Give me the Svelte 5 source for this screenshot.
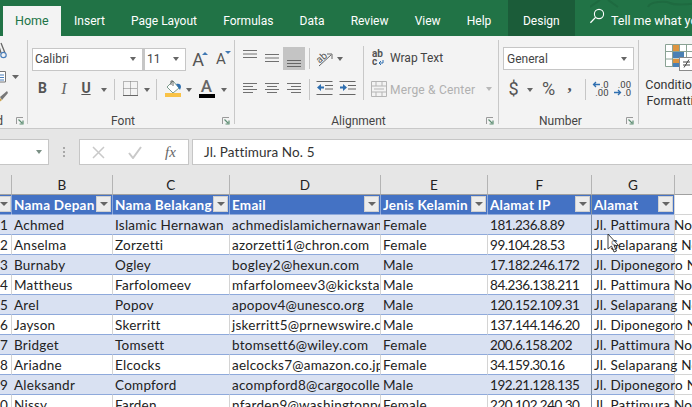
<script>
  const tabs = ['Insert', 'Page Layout', 'Formulas', 'Data', 'Review', 'View', 'Help'];
  const cols = ['B', 'C', 'D', 'E', 'F', 'G'];
  const heads = ['Nama Depan', 'Nama Belakang', 'Email', 'Jenis Kelamin', 'Alamat IP', 'Alamat'];
  const P = 'Jl. Pattimura No. 5', S = 'Jl. Selaparang No. 12', D = 'Jl. Diponegoro No. 8';
  const rows = [
    ['1', 'Achmed', 'Islamic Hernawan', 'achmedislamichernawan@mail.com', 'Female', '181.236.8.89', P],
    ['2', 'Anselma', 'Zorzetti', 'azorzetti1@chron.com', 'Female', '99.104.28.53', S],
    ['3', 'Burnaby', 'Ogley', 'bogley2@hexun.com', 'Male', '17.182.246.172', D],
    ['4', 'Mattheus', 'Farfolomeev', 'mfarfolomeev3@kickstarter.com', 'Male', '84.236.138.211', P],
    ['5', 'Arel', 'Popov', 'apopov4@unesco.org', 'Male', '120.152.109.31', S],
    ['6', 'Jayson', 'Skerritt', 'jskerritt5@prnewswire.com', 'Male', '137.144.146.20', D],
    ['7', 'Bridget', 'Tomsett', 'btomsett6@wiley.com', 'Female', '200.6.158.202', P],
    ['8', 'Ariadne', 'Elcocks', 'aelcocks7@amazon.co.jp', 'Female', '34.159.30.16', S],
    ['9', 'Aleksandr', 'Compford', 'acompford8@cargocollective.com', 'Male', '192.21.128.135', D],
    ['10', 'Nissy', 'Farden', 'nfarden9@washingtonpost.com', 'Female', '220.102.240.30', P]
  ];
</script>

{#snippet caret()}<i class="caret"></i>{/snippet}
{#snippet launcher()}
  <svg class="launcher" width="8" height="8" viewBox="0 0 8 8"><path d="M.5 7V.5H7" fill="none" stroke="#9a9a9a"/><path d="M2.5 2.5 6 6M7 3.5V7H3.5" fill="none" stroke="#5f8f74" stroke-width="1.2"/></svg>
{/snippet}
{#snippet lines(d)}
  <svg width="16" height="21" viewBox="0 0 16 21"><path {d} fill="none" stroke="#707070"/></svg>
{/snippet}

<div class="page">
  <nav class="tabs">
    <svg class="deco" width="110" height="8" viewBox="0 0 110 8"><path d="M0 7 10 0M18 0 28 7M58 7C60 1 76 1 80 3S100 5 110 2" fill="none" stroke="#1e6a40" stroke-width="2"/></svg>
    <div class="tab home">Home</div>
    {#each tabs as t}<div class="tab">{t}</div>{/each}
    <div class="tab design">Design</div>
    <svg class="search" width="16" height="16" viewBox="0 0 16 16"><circle cx="10" cy="6" r="4.6" fill="none" stroke="#fff" stroke-width="1.1"/><path d="M6.6 9.4 1.4 14.8" stroke="#fff" stroke-width="1.3"/></svg>
    <div class="tell">Tell me what you want to do</div>
  </nav>

  <section class="ribbon">
    <div class="group g-clip">
      <svg class="clip-icons" width="27" height="68" viewBox="0 0 27 68">
        <path d="M1 1 5 11M-2 1l3 10" fill="none" stroke="#666" stroke-width="1.3"/>
        <circle cx="3.5" cy="13" r="2.7" fill="none" stroke="#4a7ebb" stroke-width="1.2"/>
        <path d="M-3 29.500H5.500V40H-3" fill="#fff" stroke="#777"/>
        <path d="M0 33h4M0 35.500h4M0 38h4" stroke="#4a7ebb"/>
        <path d="M12 33h7l-3.500 4z" fill="#666"/>
        <path d="M7 49 0 55l2 3 6-7z" fill="#777"/>
        <path d="M0 56 2 58-3 62z" fill="#caa24b"/>
      </svg>
      <div class="label clip-label"><span>Clipboard</span>{@render launcher()}</div>
    </div>

    <div class="group g-font">
      <div class="grid font-r1">
        <div class="box">Calibri{@render caret()}</div>
        <div class="box size">11{@render caret()}</div>
        <div class="cell-i"><span class="big-a">A</span><i class="tri up"></i></div>
        <div class="cell-i"><span class="small-a">A</span><i class="tri down"></i></div>
      </div>
      <div class="grid font-r2">
        <b class="bold">B</b>
        <span class="ital">I</span>
        <b class="under">U</b>
        {@render caret()}
        <i class="sep"></i>
        <svg class="up2" width="15" height="15" viewBox="0 0 15 15"><path d="M.5.500h14v14H.5zM7.500.500v14M.5 7.500h14" fill="none" stroke="#777" stroke-dasharray="1 1"/><path d="M0 14.500h15" stroke="#666"/></svg>
        {@render caret()}
        <i class="sep"></i>
        <svg class="up2" width="17" height="17" viewBox="0 0 17 17"><path d="M8 1 14 8l-6 5-6-6z" fill="#fff" stroke="#7d9c8d"/><path d="M6 5V1h2v5" fill="none" stroke="#666"/><path d="M11 4c3-1 5 0 5 3l-1 3-2-3z" fill="#2f6fb0"/><rect y="13" width="16" height="4" fill="#f9c246"/></svg>
        {@render caret()}
        <div class="color-a up2"><span>A</span><i></i></div>
        {@render caret()}
      </div>
      <div class="label">Font{@render launcher()}</div>
    </div>

    <div class="group g-align">
      <div class="align-main">
        <div class="grid al-r1">
          {@render lines('M1 3.500h14M1 7h14M1 10.500h14')}
          {@render lines('M1 6.500h14M1 10h14M1 13.500h14')}
          <div class="selected"><svg width="16" height="22" viewBox="0 0 16 22"><path d="M1 13.500h14M1 16.500h14M1 19.500h14" fill="none" stroke="#666"/></svg></div>
          <i class="sep"></i>
          <svg class="orient" width="18" height="18" viewBox="0 0 18 18"><text x="1" y="11" transform="rotate(-42 6 9)" class="orient-t">ab</text><path d="M3 16 15 5M11 4h5v5" fill="none" stroke="#666"/></svg>
          {@render caret()}
        </div>
        <div class="grid al-r2">
          {@render lines('M1 4.500h14M1 7.500h10M1 10.500h14M1 13.500h10')}
          {@render lines('M1 4.500h14M3 7.500h10M1 10.500h14M3 13.500h10')}
          {@render lines('M1 4.500h14M5 7.500h10M1 10.500h14M5 13.500h10')}
          <i class="sep"></i>
          <svg class="up2" width="17" height="15" viewBox="0 0 17 15"><path d="M.5.500h16M9 4.500h8M9 8h8M.5 13.500h16" stroke="#666" fill="none"/><path d="M1 6.500 5 3v2.500h3v2H5V10z" fill="#2f6fb0"/></svg>
          <svg class="up2" width="17" height="15" viewBox="0 0 17 15"><path d="M.5.500h16M9 4.500h8M9 8h8M.5 13.500h16" stroke="#666" fill="none"/><path d="M8 6.500 4 3v2.500H1v2h3V10z" fill="#2f6fb0"/></svg>
        </div>
      </div>
      <div class="align-side">
        <div class="side-row">
          <svg class="wrap-i" width="14" height="18" viewBox="0 0 14 18"><text x="0" y="8" class="abc">ab</text><text x="0" y="16" class="abc">c</text><path d="M11 11v3H7M9 12l-2 2 2 2" fill="none" stroke="#2f6fb0"/></svg>
          <span class="side-t">Wrap Text</span>
        </div>
        <div class="side-row off">
          <svg class="merge-i" width="16" height="16" viewBox="0 0 16 16"><path d="M.5.500h15v15H.5zM.5 5h15M.5 11h15M5 .5V5M11 .5V5M5 11v4.500M11 11v4.500M3 8h10" fill="none" stroke="#b5b5b5"/></svg>
          <span class="side-t merge-t">Merge &amp; Center</span>
          {@render caret()}
        </div>
      </div>
      <div class="label">Alignment{@render launcher()}</div>
    </div>

    <div class="group g-num">
      <div class="box general">General{@render caret()}</div>
      <div class="grid num-r2">
        <span class="sym">$</span>
        {@render caret()}
        <span class="sym">%</span>
        <b class="comma">,</b>
        <i class="sep"></i>
        <div class="dec"><svg width="8" height="7" viewBox="0 0 8 7"><path d="M8 3.500H2M4 1 1.500 3.500 4 6" fill="none" stroke="#2f6fb0" stroke-width="1.3"/></svg><span>.0</span><span class="full">.00</span></div>
        <div class="dec"><span class="full top">.00</span><svg width="8" height="7" viewBox="0 0 8 7"><path d="M0 3.500h6M4 1l2.500 2.500L4 6" fill="none" stroke="#2f6fb0" stroke-width="1.3"/></svg><span>.0</span></div>
      </div>
      <div class="label">Number{@render launcher()}</div>
    </div>

    <div class="g-styles">
      <svg class="cf" width="30" height="28" viewBox="0 0 30 28">
        <path d="M.5.500h27v22H.5zM.5 7.500h27M.5 15h27M7.500.5v22M14.500.5v22M21.500.5v22" fill="#fff" stroke="#8aa294"/>
        <path d="M8 1h6v6H8zM8 15h9v4H8z" fill="#dd9440"/>
        <path d="M8 8h11v6H8zM8 19h6v4H8z" fill="#4a80b4"/>
        <rect x="14.500" y="13.500" width="14" height="13" fill="#fff" stroke="#8a8a8a"/>
        <path d="M18 18h7M18 21h7M24 15.500l-5 8" stroke="#444" fill="none"/>
      </svg>
      <div class="cf-t">Conditional<br />Formatting</div>
    </div>
  </section>

  <section class="formula">
    <div class="namebox">{@render caret()}</div>
    <div class="dots"><i></i><i></i><i></i></div>
    <div class="fbtns">
      <svg width="13" height="13" viewBox="0 0 13 13"><path d="M1 1 12 12M12 1 1 12" stroke="#c9c9c9" stroke-width="1.500"/></svg>
      <svg width="14" height="13" viewBox="0 0 14 13"><path d="M1 7l4 5 8-11" fill="none" stroke="#c9c9c9" stroke-width="2"/></svg>
      <span class="fx">fx</span>
    </div>
    <div class="finput">Jl. Pattimura No. 5</div>
  </section>

  <section class="sheet">
    <div class="row colhead">
      <div class="ch"></div>
      {#each cols as c}<div class="ch">{c}</div>{/each}
      <div class="ch"></div>
    </div>
    <div class="row thead">
      <div class="th first"><span class="fb"><i></i></span></div>
      {#each heads as h, i}
        <div class="th" class:thick={i === 5}><span class="tht">{h}</span><span class="fb"><i></i></span></div>
      {/each}
      <div class="rest"></div>
    </div>
    {#each rows as r, n}
      <div class="row data" class:band={n % 2 === 0}>
        <div class="td num"><span>{r[0]}</span></div>
        {#each r.slice(1) as v, i}
          <div class="td" class:ip={i === 4} class:thick={i === 5} class:over={i === 5}>{v}</div>
        {/each}
        <div class="rest"></div>
      </div>
    {/each}
    <svg class="pointer" width="14" height="21" viewBox="0 0 14 21"><path d="M1 1V16L4.500 13 7 19 9.500 18 7 12.500H11.500Z" fill="#ffffff" fill-opacity=".55" stroke="#3c3c3c"/></svg>
  </section>
</div>

<style>
  :global(body) { margin: 0; background: #e6e6e6; }
  .page { width: 692px; height: 407px; overflow: hidden; position: relative; font-family: Roboto, sans-serif; }
  .tabs { display: flex; height: 36px; background: #217346; color: #fff; font-size: 12px; align-items: flex-end; white-space: nowrap; padding-left: 3px; box-sizing: border-box; position: relative; overflow: hidden; }
  .deco { position: absolute; left: 590px; top: 0; }
  .tab { flex: none; height: 30px; line-height: 30px; padding: 0 13.1px; }
  .home { width: 58px; box-sizing: border-box; padding: 0 0 0 12px; background: #f3f3f3; color: #217346; font-size: 12.500px; }
  .design { height: 36px; line-height: 42px; width: 67px; padding: 0 0 0 15px; box-sizing: border-box; margin-left: 3.500px; background: #1b5c39; }
  .search { margin: 0 6px 12px 14px; flex: none; position: relative; }
  .tell { flex: none; font-size: 12.500px; height: 30px; line-height: 30px; }

  .ribbon { display: flex; height: 93px; background: #f3f3f3; border-bottom: 1px solid #c8c8c8; box-sizing: border-box; color: #444; font-size: 12px; overflow: hidden; }
  .group { height: 84px; margin-top: 4px; border-right: 1px solid #c8c8c8; position: relative; flex: none; padding-top: 7px; box-sizing: border-box; }
  .g-clip { width: 28px; padding-top: 0; }
  .g-font { width: 207px; padding-left: 4px; }
  .g-align { width: 264px; display: grid; grid-template-columns: 128px 1fr; grid-template-rows: 53px 1fr; }
  .g-num { width: 140px; padding-left: 4px; }
  .g-styles { flex: 1; position: relative; margin-top: 8px; }
  .clip-icons { display: block; margin-top: 2px; }

  .grid { display: grid; align-items: center; justify-items: center; }
  .font-r1 { grid-template-columns: 111px 43px 24px 22px; height: 23px; }
  .font-r2 { grid-template-columns: 21px 22px 22px 13px 8px 24px 9px 11px 22px 10px 25px 9px; height: 21px; margin-top: 9px; }
  .up2 { margin-top: -2px; }
  .box { justify-self: stretch; height: 23px; box-sizing: border-box; background: #fff; border: 1px solid #c6c6c6; display: flex; align-items: center; justify-content: space-between; padding: 0 6px 0 2px; font-size: 12px; color: #444; }
  .box.size { border-left-width: 2px; }
  .general { width: 131px; padding-left: 3px; }
  .caret { display: block; width: 0; height: 0; border: 3.500px solid transparent; border-top: 4px solid #666; border-bottom: 0; }
  .sep { display: block; width: 1px; height: 21px; background: #c6c6c6; }
  .cell-i { position: relative; display: flex; justify-content: center; width: 100%; color: #555; }
  .big-a { font-size: 18px; line-height: 23px; }
  .small-a { font-size: 15px; line-height: 23px; margin-top: 1px; }
  .tri { position: absolute; right: 2px; top: 4px; width: 0; height: 0; border: 3px solid transparent; }
  .tri.up { border-bottom: 3px solid #3f78b3; border-top: 0; }
  .tri.down { border-top: 3px solid #3f78b3; border-bottom: 0; right: 1px; }
  .bold, .under { font-size: 14px; color: #555; line-height: 19px; margin-top: -2px; }
  .under { text-decoration: underline; }
  .ital { font-family: "Liberation Serif", serif; font-style: italic; font-size: 16px; color: #666; line-height: 19px; margin-top: -2px; }
  .color-a { display: flex; flex-direction: column; align-items: center; width: 16px; color: #666; }
  .color-a span { font-size: 17px; line-height: 15px; font-weight: 500; }
  .color-a i { width: 16px; height: 4px; background: #000; display: block; }

  .label { position: absolute; left: 0; right: 16px; top: 73px; height: 16px; line-height: 16px; text-align: center; font-size: 12px; color: #444; }
  .label .launcher { position: absolute; right: -12px; top: 4px; }
  .clip-label { right: auto; width: 3px; display: block; }
  .clip-label span { position: absolute; right: 0; top: 0; width: 3px; overflow: hidden; direction: rtl; }
  .clip-label .launcher { left: 16px; right: auto; }

  .align-main { grid-column: 1; grid-row: 1 / 3; padding-left: 5px; }
  .al-r1 { grid-template-columns: 20px 23px 22px 8px 23px 7px; height: 23px; }
  .al-r2 { grid-template-columns: 20px 23px 22px 8px 23px 22px; height: 21px; margin-top: 9px; }
  .selected { width: 22px; height: 23px; background: #c4c4c4; display: flex; justify-content: center; }
  .al-r1 > svg:nth-child(1) { align-self: start; }
  .orient-t { font: 10px Roboto, sans-serif; fill: #555; }
  .align-side { grid-column: 2; grid-row: 1 / 3; height: 54px; margin-top: -1px; border-left: 1px solid #c8c8c8; padding-left: 7px; box-sizing: border-box; display: flex; flex-direction: column; }
  .side-row { height: 23px; display: flex; align-items: center; position: relative; padding-left: 19px; }
  .side-row + .side-row { margin-top: 9px; }
  .side-t { margin-top: 2px; }
  .wrap-i { position: absolute; left: 1px; top: 3px; }
  .merge-i { position: absolute; left: 0; top: 3px; }
  .merge-t { letter-spacing: .2px; }
  .abc { font: 700 10px Roboto, sans-serif; fill: #555; }
  .off { color: #b0b0b0; }
  .off .caret { margin-left: 11px; border-top-color: #b8b8b8; }

  .num-r2 { grid-template-columns: 21px 12px 25px 17px 14px 16px 29px; height: 21px; margin-top: 9px; }
  .sym { font-size: 18px; line-height: 19px; color: #555; margin-top: -2px; }
  .comma { font-size: 17px; line-height: 17px; color: #555; font-family: "Liberation Serif", serif; margin-top: -8px; }
  .dec { display: grid; grid-template-columns: 8px 9px; font-size: 9.500px; line-height: 8px; color: #444; align-items: center; justify-items: end; margin-top: -2px; }
  .dec .full { grid-column: 1 / 3; }

  .cf { position: absolute; left: 26px; top: 0; }
  .cf-t { position: absolute; left: 6px; top: 33px; white-space: nowrap; text-align: center; line-height: 16px; font-size: 12.500px; color: #333; width: 64px; }

  .formula { display: flex; height: 46px; padding-top: 10px; box-sizing: border-box; background: #e6e6e6; }
  .namebox { width: 49px; height: 26px; box-sizing: border-box; background: #fff; border: 1px solid #c6c6c6; border-left: 0; display: flex; align-items: center; justify-content: flex-end; padding-right: 6px; }
  .namebox .caret { border-top-color: #7a8f84; }
  .dots { width: 30px; display: flex; flex-direction: column; align-items: center; gap: 2px; padding-top: 8px; box-sizing: border-box; }
  .dots i { width: 2px; height: 2px; background: #a8a8a8; display: block; }
  .fbtns { width: 110px; height: 26px; box-sizing: border-box; background: #fff; border: 1px solid #c6c6c6; display: grid; grid-template-columns: 37px 36px 35px; align-items: center; justify-items: center; }
  .fx { font-family: "Liberation Serif", serif; font-style: italic; font-size: 15px; color: #666; }
  .finput { flex: 1; margin-left: 3px; height: 26px; box-sizing: border-box; background: #fff; border: 1px solid #c6c6c6; border-right: 0; padding-left: 11px; line-height: 24px; font-family: Lato, sans-serif; font-size: 13.500px; color: #333; letter-spacing: .1px; }

  .sheet { font-family: Lato, sans-serif; font-size: 13.500px; letter-spacing: .25px; color: #222; background: #fff; position: relative; }
  .row { display: grid; grid-template-columns: 11px 101px 117px 151px 107px 104px 83px 1fr; }
  .colhead { height: 20px; background: #e6e6e6; }
  .ch { height: 20px; box-sizing: border-box; border-left: 1px solid #b4b4b4; border-bottom: 1px solid #a0a0a0; text-align: center; line-height: 20px; font-size: 13.500px; color: #222; }
  .ch:first-child { border-left: 0; }
  .thead { height: 19px; }
  .th { background: #4472c4; color: #fff; font-weight: 700; height: 19px; box-sizing: border-box; border-left: 1px solid #8ea9db; padding-left: 2px; display: flex; justify-content: space-between; padding-right: 1px; white-space: nowrap; overflow: hidden; line-height: 20px; }
  .th.first { border-left: 0; padding: 0; justify-content: flex-end; }
  .tht { overflow: hidden; }
  .fb { width: 15px; height: 16px; flex: none; margin-top: 1px; box-sizing: border-box; background: #ececec; border: 1px solid #d0d0d0; display: flex; align-items: center; justify-content: center; }
  .fb i { width: 0; height: 0; border: 4px solid transparent; border-top: 4px solid #666; border-bottom: 0; display: block; }
  .thick { border-left: 1px solid #84949f; }
  .data { height: 20px; }
  .td { height: 20px; box-sizing: border-box; border-top: 1px solid #8ea9db; border-left: 1px solid #d4d4d4; padding-left: 2px; white-space: nowrap; overflow: hidden; line-height: 21px; background: #fff; }
  .band .td { background: #d9e1f2; border-left-color: #d9e1f2; }
  .td.thick, .band .td.thick { border-left-color: #7f8fa5; }
  .td.ip { letter-spacing: -.45px; }
  .td.num { border-left: 0; padding: 0 3px 0 0; display: flex; justify-content: flex-end; }
  .td.over { overflow: visible; z-index: 1; }
  .rest { border-top: 1px solid #d4d4d4; border-left: 1px solid #d4d4d4; background: #fff; }
  .thead .rest { border-top: 0; }
  .pointer { position: absolute; left: 607px; top: 58px; z-index: 2; }
</style>
